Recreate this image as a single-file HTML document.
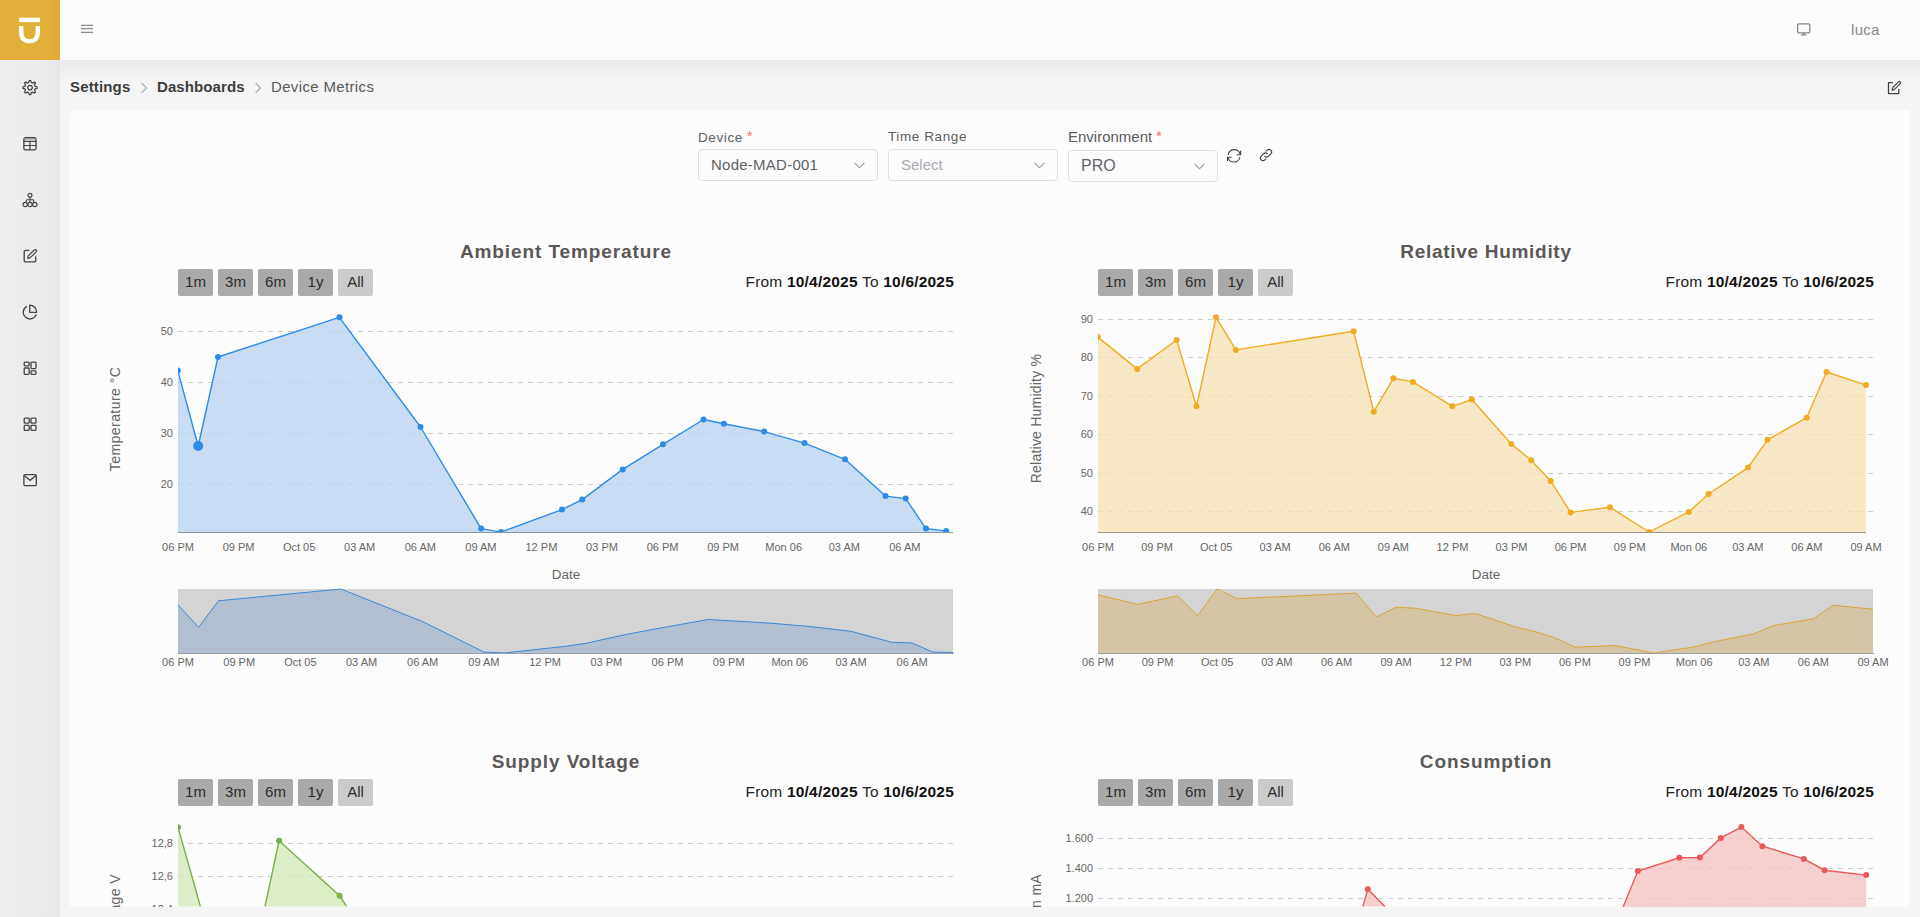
<!DOCTYPE html>
<html>
<head>
<meta charset="utf-8">
<style>
*{box-sizing:border-box;margin:0;padding:0}
html,body{width:1920px;height:917px;overflow:hidden;background:#f5f5f5;font-family:"Liberation Sans",sans-serif;color:#333}
.abs{position:absolute}
#header{position:absolute;left:0;top:0;width:1920px;height:60px;background:#fbfbfb;z-index:3}
#logo{position:absolute;left:0;top:0;width:60px;height:60px;background:linear-gradient(to right,#e2b038 0%,#e2b038 80%,#dcaa37 100%)}
#sidebar{position:absolute;left:0;top:60px;width:60px;height:857px;background:linear-gradient(to right,#eeeeee 0%,#ececec 70%,#e7e7e7 100%);z-index:2}
#sbshadow{position:absolute;left:60px;top:60px;width:10px;height:857px;background:linear-gradient(to right,rgba(0,0,0,0.035),rgba(0,0,0,0));z-index:1}
#hdshadow{position:absolute;left:60px;top:60px;width:1860px;height:22px;background:linear-gradient(to bottom,rgba(0,0,0,0.045),rgba(0,0,0,0));z-index:1}
.sico{position:absolute;left:22px;width:16px;height:16px}
#crumb{position:absolute;left:70px;top:78px;font-size:15px;color:#3d3d3d;white-space:nowrap;z-index:2}
#crumb b{font-weight:bold;letter-spacing:0.15px}
#card{position:absolute;left:70px;top:110px;width:1840px;height:797px;background:#fcfcfc;border-radius:4px 4px 0 0;overflow:hidden;z-index:2}
.lbl{position:absolute;font-size:13.5px;color:#5a5c60;white-space:nowrap;letter-spacing:0.6px}
.req{color:#f56c6c;font-size:14px;position:relative;top:-1px;margin-left:4px}
.sel{position:absolute;height:32px;border:1px solid #dcdfe6;border-radius:4px;background:#fcfcfd}
.sel span{position:absolute;left:12px;top:6px;font-size:15px;color:#606266;white-space:nowrap}
.sel span.ph{color:#a8abb2}
.sel svg{position:absolute;right:12px;top:12px}
.ttl{position:absolute;font-size:19px;font-weight:bold;color:#5b5757;white-space:nowrap;text-align:center;width:400px;letter-spacing:0.9px}
.rng{position:absolute;font-size:15.5px;color:#222;white-space:nowrap;text-align:right;width:300px;letter-spacing:0.2px}
.rng b{font-weight:bold;color:#111}
.btn{position:absolute;width:35px;height:27px;background:#aaaaaa;border-radius:2px;font-size:15px;color:#2b2b2b;text-align:center;line-height:26px}
.btn.all{background:#cbcbcb}
svg text{font-family:"Liberation Sans",sans-serif}
.yl{font-size:11px;fill:#666}
.xl{font-size:11px;fill:#666}
.at{font-size:13.5px;fill:#666}
</style>
</head>
<body>
<div id="header">
  <div id="logo">
    <svg width="60" height="60" viewBox="0 0 60 60">
      <rect x="19" y="17.7" width="21" height="4.4" fill="#fff"/>
      <path d="M19,26 H23.4 V31 C23.4,37 25.3,39.2 29.5,39.2 C33.7,39.2 35.6,37 35.6,31 V26 H40 V31 C40,40 36.5,43.2 29.5,43.2 C22.5,43.2 19,40 19,31 Z" fill="#fff"/>
    </svg>
  </div>
  <svg class="abs" style="left:80px;top:24px" width="14" height="10" viewBox="0 0 14 10">
    <path d="M1,1.4 H13 M1,4.6 H13 M1,8.3 H13" stroke="#8a8a8a" stroke-width="1.3"/>
  </svg>
  <svg class="abs" style="left:1796px;top:22px" width="16" height="16" viewBox="0 0 16 16">
    <rect x="1.6" y="1.8" width="12.2" height="9" rx="1.2" fill="none" stroke="#888" stroke-width="1.3"/>
    <path d="M7.7,10.8 V12.6 M5,12.8 H10.4" stroke="#888" stroke-width="1.3"/>
  </svg>
  <div class="abs" style="left:1851px;top:21px;font-size:15px;color:#888;letter-spacing:0.3px">luca</div>
</div>
<div id="sidebar">
  <!-- gear -->
  <svg class="sico" style="top:19px;left:22px;width:16px;height:18px" width="16" height="18" viewBox="0 0 16 18">
    <path d="M6.73,3.56 L7.18,1.55 L8.82,1.55 L9.27,3.56 L10.66,4.13 L12.41,3.03 L13.57,4.19 L12.47,5.94 L13.04,7.33 L15.05,7.78 L15.05,9.42 L13.04,9.87 L12.47,11.26 L13.57,13.01 L12.41,14.17 L10.66,13.07 L9.27,13.64 L8.82,15.65 L7.18,15.65 L6.73,13.64 L5.34,13.07 L3.59,14.17 L2.43,13.01 L3.53,11.26 L2.96,9.87 L0.95,9.42 L0.95,7.78 L2.96,7.33 L3.53,5.94 L2.43,4.19 L3.59,3.03 L5.34,4.13 Z" fill="none" stroke="#444" stroke-width="1.2" stroke-linejoin="round"/>
    <circle cx="8" cy="8.6" r="2.3" fill="none" stroke="#444" stroke-width="1.2"/>
  </svg>
  <!-- table -->
  <svg class="sico" style="top:76px" width="16" height="16" viewBox="0 0 16 16">
    <rect x="1.85" y="1.65" width="12.2" height="12.3" rx="1.8" fill="none" stroke="#444" stroke-width="1.3"/>
    <path d="M1.9,5.4 H14 M1.9,9.5 H14 M7.95,5.4 V14" stroke="#444" stroke-width="1.2"/>
    <rect x="2.6" y="2.3" width="10.7" height="1.2" fill="#888"/>
  </svg>
  <!-- hierarchy -->
  <svg class="sico" style="top:132px" width="16" height="16" viewBox="0 0 16 16">
    <circle cx="8" cy="3.3" r="2" fill="none" stroke="#444" stroke-width="1.2"/>
    <circle cx="3.2" cy="12.5" r="2.2" fill="none" stroke="#444" stroke-width="1.2"/>
    <circle cx="8" cy="12.5" r="2.2" fill="none" stroke="#444" stroke-width="1.2"/>
    <circle cx="12.8" cy="12.5" r="2.2" fill="none" stroke="#444" stroke-width="1.2"/>
    <path d="M8,5.3 V10.3 M3.8,10.3 L4.8,7.8 H11.2 L12.2,10.3" fill="none" stroke="#444" stroke-width="1.1"/>
  </svg>
  <!-- edit -->
  <svg class="sico" style="top:188px" width="16" height="16" viewBox="0 0 16 16">
    <path d="M7.5,2.3 H3.5 A1.3,1.3 0 0 0 2.2,3.6 V12.6 A1.3,1.3 0 0 0 3.5,13.9 H12.4 A1.3,1.3 0 0 0 13.7,12.6 V8.3" fill="none" stroke="#444" stroke-width="1.3"/>
    <path d="M12.6,1.8 A1.3,1.3 0 0 1 14.4,3.6 L8.3,9.7 L5.7,10.3 L6.3,7.7 Z" fill="none" stroke="#444" stroke-width="1.2" stroke-linejoin="round"/>
  </svg>
  <!-- pie -->
  <svg class="sico" style="top:244px" width="16" height="16" viewBox="0 0 16 16">
    <path d="M4.9,2.3 A6.7,6.7 0 1 0 14.3,10.4" fill="none" stroke="#444" stroke-width="1.3"/>
    <path d="M7.7,1.2 V8.3 H14.6 A7,7 0 0 0 7.7,1.2 Z" fill="none" stroke="#444" stroke-width="1.3" stroke-linejoin="round"/>
  </svg>
  <!-- layout -->
  <svg class="sico" style="top:300px" width="16" height="16" viewBox="0 0 16 16">
    <rect x="2.2" y="2.2" width="5" height="3.6" rx="0.8" fill="none" stroke="#444" stroke-width="1.3"/>
    <rect x="2.2" y="8" width="5" height="6.4" rx="0.8" fill="none" stroke="#444" stroke-width="1.3"/>
    <rect x="9" y="2.2" width="5" height="6.4" rx="0.8" fill="none" stroke="#444" stroke-width="1.3"/>
    <rect x="9" y="10.8" width="5" height="3.6" rx="0.8" fill="none" stroke="#444" stroke-width="1.3"/>
  </svg>
  <!-- grid -->
  <svg class="sico" style="top:356px" width="16" height="16" viewBox="0 0 16 16">
    <rect x="2.2" y="2.2" width="5" height="5" rx="0.8" fill="none" stroke="#444" stroke-width="1.3"/>
    <rect x="9" y="2.2" width="5" height="5" rx="0.8" fill="none" stroke="#444" stroke-width="1.3"/>
    <rect x="2.2" y="9.4" width="5" height="5" rx="0.8" fill="none" stroke="#444" stroke-width="1.3"/>
    <rect x="9" y="9.4" width="5" height="5" rx="0.8" fill="none" stroke="#444" stroke-width="1.3"/>
  </svg>
  <!-- mail -->
  <svg class="sico" style="top:412px" width="16" height="16" viewBox="0 0 16 16">
    <rect x="1.9" y="2.6" width="12.4" height="11" rx="1.2" fill="none" stroke="#444" stroke-width="1.3"/>
    <path d="M2.2,3.4 L8.1,8.3 L14,3.4" fill="none" stroke="#444" stroke-width="1.3"/>
  </svg>
</div>
<div id="hdshadow"></div>

<div id="crumb"><b>Settings</b></div>
<div class="abs" style="left:157px;top:78px;font-size:15px;color:#3d3d3d;z-index:2"><b style="letter-spacing:0.1px">Dashboards</b></div>
<div class="abs" style="left:271px;top:78px;font-size:15px;color:#5a5a5a;z-index:2;letter-spacing:0.35px">Device Metrics</div>
<svg class="abs" style="left:139px;top:81px;z-index:2" width="10" height="14" viewBox="0 0 10 14"><path d="M2.6,2 L7.4,6.9 L2.6,11.8" fill="none" stroke="#a9acb2" stroke-width="1.2"/></svg>
<svg class="abs" style="left:253px;top:81px;z-index:2" width="10" height="14" viewBox="0 0 10 14"><path d="M2.6,2 L7.4,6.9 L2.6,11.8" fill="none" stroke="#a9acb2" stroke-width="1.2"/></svg>
<!-- edit icon right -->
<svg class="abs" style="left:1886px;top:80px;z-index:2" width="16" height="16" viewBox="0 0 16 16">
  <path d="M7,2.6 H2.5 V13.6 H12.8 V9" fill="none" stroke="#444" stroke-width="1.3" stroke-linejoin="round"/>
  <path d="M12.4,1.9 A1.2,1.2 0 0 1 14.2,3.7 L8.3,9.6 L6,10.2 L6.6,7.9 Z" fill="none" stroke="#444" stroke-width="1.2" stroke-linejoin="round"/>
</svg>

<div id="card"></div>

<div id="content" class="abs" style="left:0;top:0;width:1920px;height:907px;overflow:hidden;z-index:4">
  <!-- filters -->
  <div class="lbl" style="left:698px;top:129px">Device<span class="req">*</span></div>
  <div class="sel" style="left:698px;top:149px;width:180px">
    <span style="letter-spacing:0.25px">Node-MAD-001</span>
    <svg width="11" height="7" viewBox="0 0 11 7"><path d="M0.6,0.8 L5.5,5.8 L10.4,0.8" fill="none" stroke="#999" stroke-width="1.1"/></svg>
  </div>
  <div class="lbl" style="left:888px;top:129px">Time Range</div>
  <div class="sel" style="left:888px;top:149px;width:170px">
    <span class="ph">Select</span>
    <svg width="11" height="7" viewBox="0 0 11 7"><path d="M0.6,0.8 L5.5,5.8 L10.4,0.8" fill="none" stroke="#999" stroke-width="1.1"/></svg>
  </div>
  <div class="lbl" style="left:1068px;top:128px;font-size:15px;letter-spacing:0px">Environment<span class="req">*</span></div>
  <div class="sel" style="left:1068px;top:150px;width:150px">
    <span style="font-size:16px;top:6px">PRO</span>
    <svg width="11" height="7" viewBox="0 0 11 7"><path d="M0.6,0.8 L5.5,5.8 L10.4,0.8" fill="none" stroke="#999" stroke-width="1.1"/></svg>
  </div>
  <svg class="abs" style="left:1226px;top:148px" width="16" height="16" viewBox="0 0 16 16">
    <path d="M2.3,7.1 A5.9,5.2 0 0 1 14.1,6.5 M13.8,9.2 A5.9,5.2 0 0 1 2.1,9.6" fill="none" stroke="#444" stroke-width="1.15"/>
    <path d="M14.6,2.8 V6.7 H10.7 M1.5,13.1 V9.2 H5.4" fill="none" stroke="#444" stroke-width="1.15"/>
  </svg>
  <svg class="abs" style="left:1258px;top:147px" width="16" height="16" viewBox="0 0 16 16">
    <path d="M6.6,9.4 A2.6,2.6 0 0 0 10.3,9.4 L12.8,6.9 A2.6,2.6 0 0 0 9.1,3.2 L8.2,4.1" fill="none" stroke="#444" stroke-width="1.2" stroke-linecap="round"/>
    <path d="M9.4,6.6 A2.6,2.6 0 0 0 5.7,6.6 L3.2,9.1 A2.6,2.6 0 0 0 6.9,12.8 L7.8,11.9" fill="none" stroke="#444" stroke-width="1.2" stroke-linecap="round"/>
  </svg>

  <!-- chart titles -->
  <div class="ttl" style="left:366px;top:241px">Ambient Temperature</div>
  <div class="ttl" style="left:1286px;top:241px;letter-spacing:0.7px">Relative Humidity</div>
  <div class="ttl" style="left:366px;top:751px">Supply Voltage</div>
  <div class="ttl" style="left:1286px;top:751px">Consumption</div>

  <div class="rng" style="left:654px;top:273px">From <b>10/4/2025</b> To <b>10/6/2025</b></div>
  <div class="rng" style="left:1574px;top:273px">From <b>10/4/2025</b> To <b>10/6/2025</b></div>
  <div class="rng" style="left:654px;top:783px">From <b>10/4/2025</b> To <b>10/6/2025</b></div>
  <div class="rng" style="left:1574px;top:783px">From <b>10/4/2025</b> To <b>10/6/2025</b></div>

  <div class="btn" style="left:178px;top:269px">1m</div><div class="btn" style="left:218px;top:269px">3m</div><div class="btn" style="left:258px;top:269px">6m</div><div class="btn" style="left:298px;top:269px">1y</div><div class="btn all" style="left:338px;top:269px">All</div>
  <div class="btn" style="left:1098px;top:269px">1m</div><div class="btn" style="left:1138px;top:269px">3m</div><div class="btn" style="left:1178px;top:269px">6m</div><div class="btn" style="left:1218px;top:269px">1y</div><div class="btn all" style="left:1258px;top:269px">All</div>
  <div class="btn" style="left:178px;top:779px">1m</div><div class="btn" style="left:218px;top:779px">3m</div><div class="btn" style="left:258px;top:779px">6m</div><div class="btn" style="left:298px;top:779px">1y</div><div class="btn all" style="left:338px;top:779px">All</div>
  <div class="btn" style="left:1098px;top:779px">1m</div><div class="btn" style="left:1138px;top:779px">3m</div><div class="btn" style="left:1178px;top:779px">6m</div><div class="btn" style="left:1218px;top:779px">1y</div><div class="btn all" style="left:1258px;top:779px">All</div>

  <svg class="abs" style="left:0;top:0" width="1920" height="907" viewBox="0 0 1920 907">
<defs><clipPath id="cpT"><rect x="178" y="0" width="790" height="532.5"/></clipPath><clipPath id="cpH"><rect x="1098" y="0" width="790" height="532.5"/></clipPath><clipPath id="cpV"><rect x="178" y="600" width="790" height="307"/></clipPath></defs><line x1="178" y1="331.5" x2="953" y2="331.5" stroke="#cccccc" stroke-width="1" stroke-dasharray="5,5"/><line x1="178" y1="382.5" x2="953" y2="382.5" stroke="#cccccc" stroke-width="1" stroke-dasharray="5,5"/><line x1="178" y1="433.5" x2="953" y2="433.5" stroke="#cccccc" stroke-width="1" stroke-dasharray="5,5"/><line x1="178" y1="484.5" x2="953" y2="484.5" stroke="#cccccc" stroke-width="1" stroke-dasharray="5,5"/>
<g clip-path="url(#cpT)">
<path d="M177.8,370.6 L198.2,446.0 L218.0,357.0 L339.4,317.3 L420.5,427.0 L481.1,528.6 L501.1,532.1 L562.0,509.6 L582.2,499.6 L622.7,469.4 L663.0,444.3 L703.5,419.5 L723.9,423.7 L764.2,431.6 L804.5,443.1 L845.0,459.3 L885.5,496.1 L905.7,498.6 L926.0,528.6 L946.2,530.9 L946.2,532.5 L177.8,532.5 Z" fill="#b7d3f0" fill-opacity="0.75"/>
<path d="M177.8,370.6 L198.2,446.0 L218.0,357.0 L339.4,317.3 L420.5,427.0 L481.1,528.6 L501.1,532.1 L562.0,509.6 L582.2,499.6 L622.7,469.4 L663.0,444.3 L703.5,419.5 L723.9,423.7 L764.2,431.6 L804.5,443.1 L845.0,459.3 L885.5,496.1 L905.7,498.6 L926.0,528.6 L946.2,530.9" fill="none" stroke="#2e8be6" stroke-width="1.4" stroke-linejoin="round"/>
<circle cx="177.8" cy="370.6" r="3.0" fill="#2e8be6"/><circle cx="218.0" cy="357.0" r="3.0" fill="#2e8be6"/><circle cx="339.4" cy="317.3" r="3.0" fill="#2e8be6"/><circle cx="420.5" cy="427.0" r="3.0" fill="#2e8be6"/><circle cx="481.1" cy="528.6" r="3.0" fill="#2e8be6"/><circle cx="501.1" cy="532.1" r="3.0" fill="#2e8be6"/><circle cx="562.0" cy="509.6" r="3.0" fill="#2e8be6"/><circle cx="582.2" cy="499.6" r="3.0" fill="#2e8be6"/><circle cx="622.7" cy="469.4" r="3.0" fill="#2e8be6"/><circle cx="663.0" cy="444.3" r="3.0" fill="#2e8be6"/><circle cx="703.5" cy="419.5" r="3.0" fill="#2e8be6"/><circle cx="723.9" cy="423.7" r="3.0" fill="#2e8be6"/><circle cx="764.2" cy="431.6" r="3.0" fill="#2e8be6"/><circle cx="804.5" cy="443.1" r="3.0" fill="#2e8be6"/><circle cx="845.0" cy="459.3" r="3.0" fill="#2e8be6"/><circle cx="885.5" cy="496.1" r="3.0" fill="#2e8be6"/><circle cx="905.7" cy="498.6" r="3.0" fill="#2e8be6"/><circle cx="926.0" cy="528.6" r="3.0" fill="#2e8be6"/><circle cx="946.2" cy="530.9" r="3.0" fill="#2e8be6"/>
<circle cx="198.2" cy="446.0" r="5" fill="#2e8be6"/>
</g>
<line x1="178" y1="532.5" x2="953" y2="532.5" stroke="#8f96a3" stroke-width="1.2"/>
<text x="173" y="335.1" text-anchor="end" class="yl">50</text><text x="173" y="386.1" text-anchor="end" class="yl">40</text><text x="173" y="437.2" text-anchor="end" class="yl">30</text><text x="173" y="488.2" text-anchor="end" class="yl">20</text>
<text x="178.0" y="550.8" text-anchor="middle" class="xl">06 PM</text><text x="238.6" y="550.8" text-anchor="middle" class="xl">09 PM</text><text x="299.1" y="550.8" text-anchor="middle" class="xl">Oct 05</text><text x="359.7" y="550.8" text-anchor="middle" class="xl">03 AM</text><text x="420.3" y="550.8" text-anchor="middle" class="xl">06 AM</text><text x="480.9" y="550.8" text-anchor="middle" class="xl">09 AM</text><text x="541.4" y="550.8" text-anchor="middle" class="xl">12 PM</text><text x="602.0" y="550.8" text-anchor="middle" class="xl">03 PM</text><text x="662.6" y="550.8" text-anchor="middle" class="xl">06 PM</text><text x="723.1" y="550.8" text-anchor="middle" class="xl">09 PM</text><text x="783.7" y="550.8" text-anchor="middle" class="xl">Mon 06</text><text x="844.3" y="550.8" text-anchor="middle" class="xl">03 AM</text><text x="904.8" y="550.8" text-anchor="middle" class="xl">06 AM</text>
<text x="566" y="578.5" text-anchor="middle" class="at">Date</text>
<text transform="translate(120,419) rotate(-90)" text-anchor="middle" class="at" style="font-size:14px;letter-spacing:0.45px">Temperature °C</text>
<rect x="178" y="589" width="775" height="64" fill="#d4d4d4"/>
<path d="M178.0,604.9 L198.6,627.3 L218.5,600.8 L341.0,589.0 L422.8,621.7 L483.9,652.0 L504.1,653.0 L565.5,646.3 L585.9,643.3 L626.7,634.3 L667.4,626.8 L708.2,619.5 L728.8,620.7 L769.4,623.1 L810.1,626.5 L850.9,631.3 L891.8,642.3 L912.2,643.0 L932.6,652.0 L953.0,652.6 L953.0,653 L178.0,653 Z" fill="#b1bfd0"/>
<path d="M178.0,604.9 L198.6,627.3 L218.5,600.8 L341.0,589.0 L422.8,621.7 L483.9,652.0 L504.1,653.0 L565.5,646.3 L585.9,643.3 L626.7,634.3 L667.4,626.8 L708.2,619.5 L728.8,620.7 L769.4,623.1 L810.1,626.5 L850.9,631.3 L891.8,642.3 L912.2,643.0 L932.6,652.0 L953.0,652.6" fill="none" stroke="#3a88d8" stroke-width="1"/>
<line x1="178" y1="653.5" x2="954" y2="653.5" stroke="#9aa0a8" stroke-width="1"/>
<text x="178.0" y="666" text-anchor="middle" class="xl">06 PM</text><text x="239.2" y="666" text-anchor="middle" class="xl">09 PM</text><text x="300.4" y="666" text-anchor="middle" class="xl">Oct 05</text><text x="361.6" y="666" text-anchor="middle" class="xl">03 AM</text><text x="422.7" y="666" text-anchor="middle" class="xl">06 AM</text><text x="483.9" y="666" text-anchor="middle" class="xl">09 AM</text><text x="545.1" y="666" text-anchor="middle" class="xl">12 PM</text><text x="606.3" y="666" text-anchor="middle" class="xl">03 PM</text><text x="667.5" y="666" text-anchor="middle" class="xl">06 PM</text><text x="728.7" y="666" text-anchor="middle" class="xl">09 PM</text><text x="789.8" y="666" text-anchor="middle" class="xl">Mon 06</text><text x="851.0" y="666" text-anchor="middle" class="xl">03 AM</text><text x="912.2" y="666" text-anchor="middle" class="xl">06 AM</text>
<line x1="1098" y1="319.5" x2="1873" y2="319.5" stroke="#cccccc" stroke-width="1" stroke-dasharray="5,5"/><line x1="1098" y1="357.5" x2="1873" y2="357.5" stroke="#cccccc" stroke-width="1" stroke-dasharray="5,5"/><line x1="1098" y1="396.5" x2="1873" y2="396.5" stroke="#cccccc" stroke-width="1" stroke-dasharray="5,5"/><line x1="1098" y1="434.5" x2="1873" y2="434.5" stroke="#cccccc" stroke-width="1" stroke-dasharray="5,5"/><line x1="1098" y1="473.5" x2="1873" y2="473.5" stroke="#cccccc" stroke-width="1" stroke-dasharray="5,5"/><line x1="1098" y1="511.5" x2="1873" y2="511.5" stroke="#cccccc" stroke-width="1" stroke-dasharray="5,5"/>
<g clip-path="url(#cpH)">
<path d="M1097.8,337.1 L1137.2,368.9 L1176.6,340.0 L1196.5,406.3 L1216.0,317.3 L1235.9,349.9 L1353.6,331.2 L1373.8,411.7 L1393.4,378.3 L1412.9,381.9 L1452.4,406.3 L1471.9,399.5 L1511.3,444.0 L1531.2,460.2 L1550.7,480.9 L1570.6,512.4 L1610.0,507.3 L1649.2,532.0 L1688.7,511.9 L1708.6,494.0 L1748.0,467.6 L1767.5,439.8 L1806.7,417.7 L1826.5,372.0 L1866.0,385.1 L1866.0,532.5 L1097.8,532.5 Z" fill="#f7e2b3" fill-opacity="0.75"/>
<path d="M1097.8,337.1 L1137.2,368.9 L1176.6,340.0 L1196.5,406.3 L1216.0,317.3 L1235.9,349.9 L1353.6,331.2 L1373.8,411.7 L1393.4,378.3 L1412.9,381.9 L1452.4,406.3 L1471.9,399.5 L1511.3,444.0 L1531.2,460.2 L1550.7,480.9 L1570.6,512.4 L1610.0,507.3 L1649.2,532.0 L1688.7,511.9 L1708.6,494.0 L1748.0,467.6 L1767.5,439.8 L1806.7,417.7 L1826.5,372.0 L1866.0,385.1" fill="none" stroke="#f0ab20" stroke-width="1.4" stroke-linejoin="round"/>
<circle cx="1097.8" cy="337.1" r="3.0" fill="#f0ab20"/><circle cx="1137.2" cy="368.9" r="3.0" fill="#f0ab20"/><circle cx="1176.6" cy="340.0" r="3.0" fill="#f0ab20"/><circle cx="1196.5" cy="406.3" r="3.0" fill="#f0ab20"/><circle cx="1216.0" cy="317.3" r="3.0" fill="#f0ab20"/><circle cx="1235.9" cy="349.9" r="3.0" fill="#f0ab20"/><circle cx="1353.6" cy="331.2" r="3.0" fill="#f0ab20"/><circle cx="1373.8" cy="411.7" r="3.0" fill="#f0ab20"/><circle cx="1393.4" cy="378.3" r="3.0" fill="#f0ab20"/><circle cx="1412.9" cy="381.9" r="3.0" fill="#f0ab20"/><circle cx="1452.4" cy="406.3" r="3.0" fill="#f0ab20"/><circle cx="1471.9" cy="399.5" r="3.0" fill="#f0ab20"/><circle cx="1511.3" cy="444.0" r="3.0" fill="#f0ab20"/><circle cx="1531.2" cy="460.2" r="3.0" fill="#f0ab20"/><circle cx="1550.7" cy="480.9" r="3.0" fill="#f0ab20"/><circle cx="1570.6" cy="512.4" r="3.0" fill="#f0ab20"/><circle cx="1610.0" cy="507.3" r="3.0" fill="#f0ab20"/><circle cx="1649.2" cy="532.0" r="3.0" fill="#f0ab20"/><circle cx="1688.7" cy="511.9" r="3.0" fill="#f0ab20"/><circle cx="1708.6" cy="494.0" r="3.0" fill="#f0ab20"/><circle cx="1748.0" cy="467.6" r="3.0" fill="#f0ab20"/><circle cx="1767.5" cy="439.8" r="3.0" fill="#f0ab20"/><circle cx="1806.7" cy="417.7" r="3.0" fill="#f0ab20"/><circle cx="1826.5" cy="372.0" r="3.0" fill="#f0ab20"/><circle cx="1866.0" cy="385.1" r="3.0" fill="#f0ab20"/>
</g>
<line x1="1098" y1="532.5" x2="1866" y2="532.5" stroke="#9c978e" stroke-width="1.2"/>
<text x="1093" y="323.2" text-anchor="end" class="yl">90</text><text x="1093" y="361.2" text-anchor="end" class="yl">80</text><text x="1093" y="400.0" text-anchor="end" class="yl">70</text><text x="1093" y="438.3" text-anchor="end" class="yl">60</text><text x="1093" y="476.9" text-anchor="end" class="yl">50</text><text x="1093" y="515.1" text-anchor="end" class="yl">40</text>
<text x="1098.0" y="550.8" text-anchor="middle" class="xl">06 PM</text><text x="1157.1" y="550.8" text-anchor="middle" class="xl">09 PM</text><text x="1216.2" y="550.8" text-anchor="middle" class="xl">Oct 05</text><text x="1275.2" y="550.8" text-anchor="middle" class="xl">03 AM</text><text x="1334.3" y="550.8" text-anchor="middle" class="xl">06 AM</text><text x="1393.4" y="550.8" text-anchor="middle" class="xl">09 AM</text><text x="1452.5" y="550.8" text-anchor="middle" class="xl">12 PM</text><text x="1511.5" y="550.8" text-anchor="middle" class="xl">03 PM</text><text x="1570.6" y="550.8" text-anchor="middle" class="xl">06 PM</text><text x="1629.7" y="550.8" text-anchor="middle" class="xl">09 PM</text><text x="1688.8" y="550.8" text-anchor="middle" class="xl">Mon 06</text><text x="1747.8" y="550.8" text-anchor="middle" class="xl">03 AM</text><text x="1806.9" y="550.8" text-anchor="middle" class="xl">06 AM</text><text x="1866.0" y="550.8" text-anchor="middle" class="xl">09 AM</text>
<text x="1486" y="578.5" text-anchor="middle" class="at">Date</text>
<text transform="translate(1040.5,418.5) rotate(-90)" text-anchor="middle" class="at" style="font-size:14px;letter-spacing:0.22px">Relative Humidity %</text>
<rect x="1098" y="589" width="775" height="64" fill="#d4d4d4"/>
<path d="M1098.0,594.9 L1137.7,604.4 L1177.5,595.8 L1197.6,615.5 L1217.2,589.0 L1237.3,598.7 L1356.1,593.1 L1376.4,617.1 L1396.2,607.2 L1415.9,608.3 L1455.7,615.5 L1475.4,613.5 L1515.2,626.8 L1535.2,631.6 L1554.9,637.8 L1575.0,647.2 L1614.7,645.6 L1654.3,653.0 L1694.1,647.0 L1714.2,641.7 L1754.0,633.8 L1773.6,625.5 L1813.2,618.9 L1833.2,605.3 L1873.0,609.2 L1873.0,653 L1098.0,653 Z" fill="#d3c5a6"/>
<path d="M1098.0,594.9 L1137.7,604.4 L1177.5,595.8 L1197.6,615.5 L1217.2,589.0 L1237.3,598.7 L1356.1,593.1 L1376.4,617.1 L1396.2,607.2 L1415.9,608.3 L1455.7,615.5 L1475.4,613.5 L1515.2,626.8 L1535.2,631.6 L1554.9,637.8 L1575.0,647.2 L1614.7,645.6 L1654.3,653.0 L1694.1,647.0 L1714.2,641.7 L1754.0,633.8 L1773.6,625.5 L1813.2,618.9 L1833.2,605.3 L1873.0,609.2" fill="none" stroke="#dba334" stroke-width="1"/>
<line x1="1098" y1="653.5" x2="1874" y2="653.5" stroke="#9aa0a8" stroke-width="1"/>
<text x="1098.0" y="666" text-anchor="middle" class="xl">06 PM</text><text x="1157.6" y="666" text-anchor="middle" class="xl">09 PM</text><text x="1217.2" y="666" text-anchor="middle" class="xl">Oct 05</text><text x="1276.8" y="666" text-anchor="middle" class="xl">03 AM</text><text x="1336.5" y="666" text-anchor="middle" class="xl">06 AM</text><text x="1396.1" y="666" text-anchor="middle" class="xl">09 AM</text><text x="1455.7" y="666" text-anchor="middle" class="xl">12 PM</text><text x="1515.3" y="666" text-anchor="middle" class="xl">03 PM</text><text x="1574.9" y="666" text-anchor="middle" class="xl">06 PM</text><text x="1634.5" y="666" text-anchor="middle" class="xl">09 PM</text><text x="1694.2" y="666" text-anchor="middle" class="xl">Mon 06</text><text x="1753.8" y="666" text-anchor="middle" class="xl">03 AM</text><text x="1813.4" y="666" text-anchor="middle" class="xl">06 AM</text><text x="1873.0" y="666" text-anchor="middle" class="xl">09 AM</text>
<line x1="178" y1="843.5" x2="953" y2="843.5" stroke="#cccccc" stroke-width="1" stroke-dasharray="5,5"/><line x1="178" y1="876.5" x2="953" y2="876.5" stroke="#cccccc" stroke-width="1" stroke-dasharray="5,5"/><line x1="178" y1="909.5" x2="953" y2="909.5" stroke="#cccccc" stroke-width="1" stroke-dasharray="5,5"/>
<g clip-path="url(#cpV)">
<path d="M178,827.3 L200.4,906.4 L178,906.4 Z M265,906.4 L279.1,840.8 L339.6,895.8 L346.7,906.4 Z" fill="#d1e8b5" fill-opacity="0.75"/>
<path d="M178,827.3 L200.4,906.4 M265,906.4 L279.1,840.8 L339.6,895.8 L346.7,906.4" fill="none" stroke="#78b04a" stroke-width="1.4"/>
<circle cx="178.0" cy="827.3" r="3.0" fill="#78b04a"/><circle cx="279.1" cy="840.8" r="3.0" fill="#78b04a"/><circle cx="339.6" cy="895.8" r="3.0" fill="#78b04a"/>
</g>
<text x="173" y="847.4" text-anchor="end" class="yl">12,8</text><text x="173" y="880.2" text-anchor="end" class="yl">12,6</text><text x="173" y="913.0" text-anchor="end" class="yl">12,4</text>
<text transform="translate(120,874) rotate(-90)" text-anchor="end" class="at" style="font-size:14px;letter-spacing:0.4px">Supply Voltage V</text>
<line x1="1098" y1="838.5" x2="1873" y2="838.5" stroke="#cccccc" stroke-width="1" stroke-dasharray="5,5"/><line x1="1098" y1="868.5" x2="1873" y2="868.5" stroke="#cccccc" stroke-width="1" stroke-dasharray="5,5"/><line x1="1098" y1="898.5" x2="1873" y2="898.5" stroke="#cccccc" stroke-width="1" stroke-dasharray="5,5"/>
<path d="M1362.9,906.4 L1367.8,889.2 L1384.9,906.4 Z" fill="#f4c0c0" fill-opacity="0.75"/>
<path d="M1362.9,906.4 L1367.8,889.2 L1384.9,906.4" fill="none" stroke="#e85a5a" stroke-width="1.4"/>
<path d="M1623.1,906.9 L1637.8,871.0 L1679.3,857.8 L1699.9,857.5 L1720.8,837.9 L1741.4,827.1 L1762.4,846.2 L1803.9,858.9 L1824.6,870.2 L1866.2,875.1 L1866.2,906.9 Z" fill="#f4c0c0" fill-opacity="0.75"/>
<path d="M1623.1,906.9 L1637.8,871.0 L1679.3,857.8 L1699.9,857.5 L1720.8,837.9 L1741.4,827.1 L1762.4,846.2 L1803.9,858.9 L1824.6,870.2 L1866.2,875.1" fill="none" stroke="#e85a5a" stroke-width="1.4"/>
<circle cx="1367.8" cy="889.2" r="3.0" fill="#e85a5a"/><circle cx="1637.8" cy="871.0" r="3.0" fill="#e85a5a"/><circle cx="1679.3" cy="857.8" r="3.0" fill="#e85a5a"/><circle cx="1699.9" cy="857.5" r="3.0" fill="#e85a5a"/><circle cx="1720.8" cy="837.9" r="3.0" fill="#e85a5a"/><circle cx="1741.4" cy="827.1" r="3.0" fill="#e85a5a"/><circle cx="1762.4" cy="846.2" r="3.0" fill="#e85a5a"/><circle cx="1803.9" cy="858.9" r="3.0" fill="#e85a5a"/><circle cx="1824.6" cy="870.2" r="3.0" fill="#e85a5a"/><circle cx="1866.2" cy="875.1" r="3.0" fill="#e85a5a"/>
<text x="1093" y="842.3" text-anchor="end" class="yl">1.600</text><text x="1093" y="872.2" text-anchor="end" class="yl">1.400</text><text x="1093" y="902.2" text-anchor="end" class="yl">1.200</text>
<text transform="translate(1040.5,874) rotate(-90)" text-anchor="end" class="at" style="font-size:14px;letter-spacing:0.3px">Consumption mA</text>
  </svg>
</div>
</body>
</html>
